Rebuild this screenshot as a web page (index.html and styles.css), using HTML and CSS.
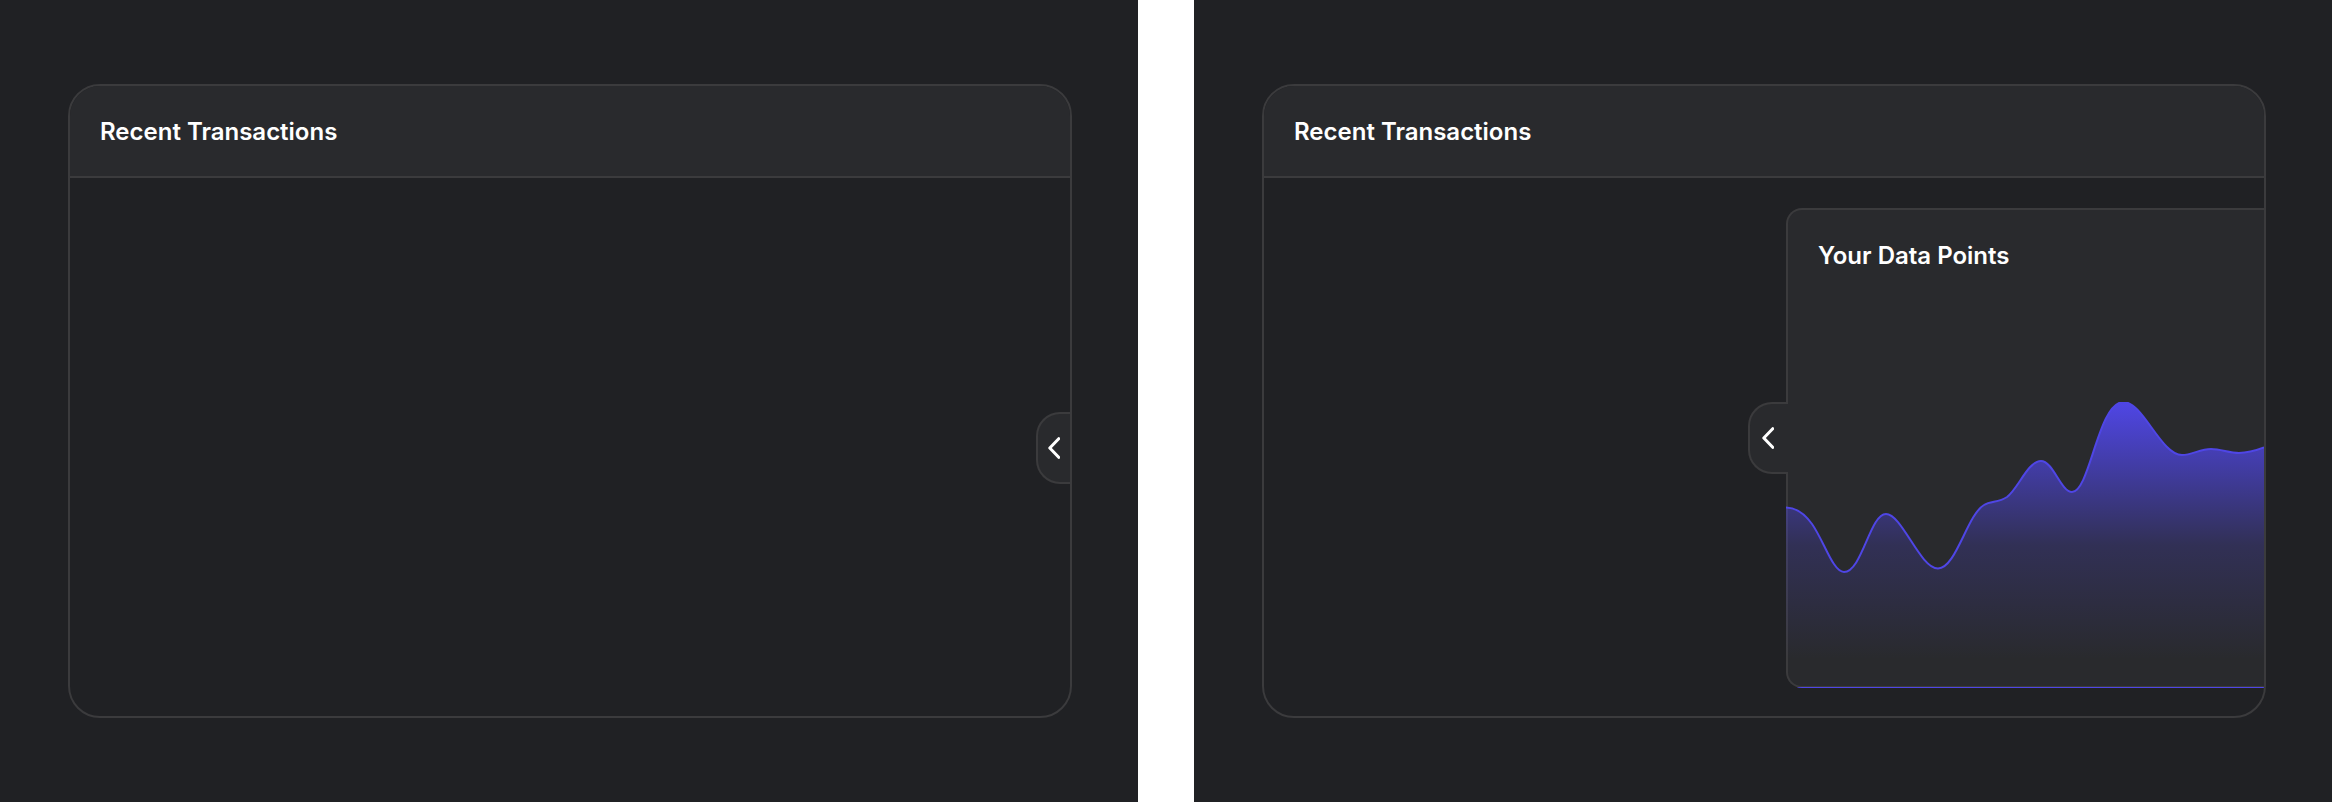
FILE: index.html
```html
<!DOCTYPE html>
<html lang="en">
<head>
<meta charset="utf-8">
<title>Recent Transactions</title>
<link rel="stylesheet" href="styles.css">
</head>
<body>
<main class="panes">
  <section class="pane">
    <article class="card">
      <header class="card-header"><h2 class="title">Recent Transactions</h2></header>
      <div class="card-body">
        <button class="handle handle-closed" type="button" aria-label="Open data panel">
          <svg class="chevron" viewBox="0 0 12 22" aria-hidden="true"><path d="M10.700 1.700 1.800 11l8.900 9.300"/></svg>
        </button>
      </div>
    </article>
  </section>
  <section class="pane">
    <article class="card">
      <header class="card-header"><h2 class="title">Recent Transactions</h2></header>
      <div class="card-body">
        <aside class="drawer">
          <h3 class="title drawer-title">Your Data Points</h3>
          <svg class="chart" viewBox="0 0 478 286" preserveAspectRatio="none" aria-hidden="true">
            <defs>
              <linearGradient id="fade" x1="0" y1="0" x2="0" y2="286" gradientUnits="userSpaceOnUse">
                <stop offset="0" stop-color="#4f46e5"/>
                <stop offset="0.5" stop-color="#4f46e5" stop-opacity="0.22"/>
                <stop offset="0.9" stop-color="#4f46e5" stop-opacity="0"/>
              </linearGradient>
            </defs>
            <path class="chart-area" fill="url(#fade)" d="M-4 105.500H0C9 105.500 18 111 26 122C38 139 47 170 58 170C76 170 84 112 100 112C116 112 134 166.500 152 166.500C170 166.500 181 113 198 103C205 98.500 212 101 221 95C232 87 242 59 255 59C267 59 275 90 286 90C304 90 312 0 337.500 0C357 0 375 53 396 53C406 53 414 47 425 47C435 47 443 51 453 51C462 51 470 48.500 478 45.500L484 43V286H-4Z"/>
          </svg>
          <button class="handle handle-open" type="button" aria-label="Toggle data panel">
            <svg class="chevron" viewBox="0 0 12 22" aria-hidden="true"><path d="M10.700 1.700 1.800 11l8.900 9.300"/></svg>
          </button>
        </aside>
      </div>
    </article>
  </section>
</main>
</body>
</html>
```
FILE: styles.css
```css
* {
  box-sizing: border-box;
}

body {
  margin: 0;
  background: #fff;
  color: #fff;
  font-family: Inter, "Liberation Sans", sans-serif;
}

.panes {
  display: grid;
  grid-template-columns: 1fr 1fr;
  gap: 56px;
  min-height: 100vh;
}

.pane {
  display: flex;
  min-width: 0;
  padding: 84px 66px 84px 68px;
  background: #202124;
}

.card {
  display: flex;
  flex: 1;
  flex-direction: column;
  min-width: 0;
  overflow: hidden;
  border: 2px solid #3b3b3d;
  border-radius: 32px;
}

.card-header {
  padding: 30px 30px 28px;
  border-bottom: 2px solid #3b3b3d;
  background: #292a2d;
}

.title {
  margin: 0;
  font-size: 24px;
  font-weight: 600;
  line-height: 32px;
}

.card-body {
  position: relative;
  display: flex;
  flex: 1;
  flex-direction: column;
}

.drawer {
  position: relative;
  display: flex;
  flex: 1;
  flex-direction: column;
  margin: 30px 0 28px 52.2%;
  border: 2px solid #3b3b3d;
  border-right: 0;
  border-radius: 16px 0 0 16px;
  background: #292a2d;
}

.drawer-title {
  padding: 30px 30px 0;
}

/* The chart runs over the drawer's own border on the left and bottom. */
.chart {
  display: block;
  height: 286px;
  margin: auto 0 -2px -2px;
  border-bottom-left-radius: 16px;
  overflow: hidden;
}

.chart-area {
  stroke: #4f46e5;
  stroke-width: 2;
}

.handle {
  position: absolute;
  height: 72px;
  padding: 0;
  border: 2px solid #3b3b3d;
  border-right: 0;
  border-radius: 24px 0 0 24px;
  background: #292a2d;
  color: #fff;
  cursor: pointer;
}

.handle-closed {
  top: 50%;
  right: 0;
  width: 34px;
  margin-top: -35px;
  padding-left: 10px;
}

.handle-open {
  top: 192px;
  left: -40px;
  width: 40px;
  padding-left: 12px;
}

.chevron {
  display: block;
  width: 12px;
  height: 22px;
  fill: none;
  stroke: currentColor;
  stroke-width: 3;
  stroke-linecap: round;
  stroke-linejoin: round;
}
```
